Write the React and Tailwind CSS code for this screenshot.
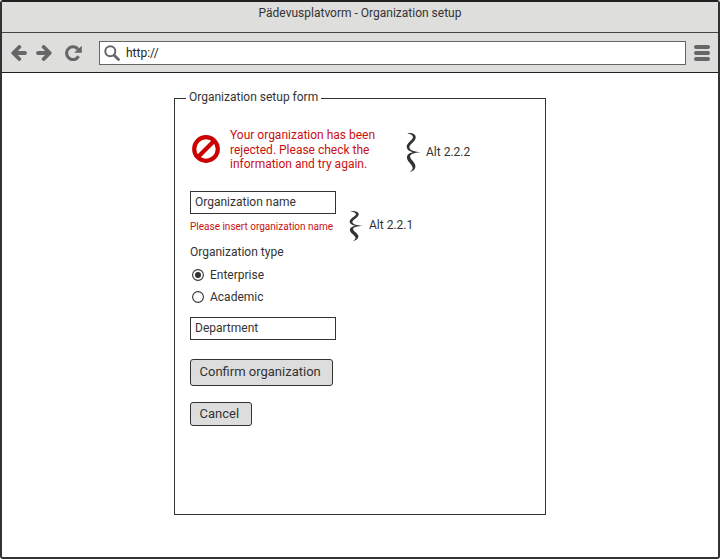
function Brace({ className }) {
  return (
    <svg className={className} viewBox="0 0 15 39" preserveAspectRatio="none" fill="#333">
      <path d="M1.3 .3 C5.5 -.4 9.8 1 9.7 4.4 C9.5 8.3 3.9 10.8 3.4 13.9 C3.1 16.4 6.6 18.6 14.7 19.3 C7.5 20 4 21.2 4.1 23.8 C4.3 26.8 9.5 29.4 9.4 33.2 C9.3 36.4 7 38.5 3.6 38.9 C6.2 37.6 7.1 36 6.3 33.8 C5.2 30.8 1 28.3 .9 24.6 C.8 21.8 3 20.1 6.8 19.3 C3.2 18.4 .7 16.7 .7 13.6 C.8 9.8 5.6 7.8 6.8 4.9 C7.5 2.6 5.2 1.1 1.3 .3 Z" />
    </svg>
  );
}

function Arrow({ className }) {
  return (
    <svg className={className} viewBox="0 0 16 16" fill="none" stroke="#666" strokeWidth="3.8" strokeLinecap="round">
      <path d="M8.3 2 L2.3 8 L8.3 14" strokeLinejoin="round" />
      <path d="M3 8 H14" />
    </svg>
  );
}

function Radio({ label, checked }) {
  return (
    <label className="flex h-[22px] items-center pl-[2px]">
      <svg className="h-3 w-3" viewBox="0 0 12 12">
        <circle cx="6" cy="6" r="5.4" fill="#fff" stroke="#333" strokeWidth="1.1" />
        {checked && <circle cx="6" cy="6" r="3" fill="#333" />}
      </svg>
      <span className="ml-[6px]">{label}</span>
    </label>
  );
}

export default function App() {
  return (
    <div className="flex h-[559px] w-[720px] flex-col overflow-hidden rounded-[3px] border-2 border-[#333] border-t-[#231f20] bg-white font-[Roboto,sans-serif] text-[12px] leading-[14px] whitespace-nowrap text-[#333]">
      <header className="h-[31px] border-b border-[#444] bg-[#dededd] pt-[4px] text-center">
        Pädevusplatvorm - Organization setup
      </header>
      <div className="flex h-[40px] items-center border-b border-[#231f20] bg-[#dededd] pl-[9px]">
        <Arrow className="h-4 w-4" />
        <Arrow className="ml-[9px] h-4 w-4 rotate-180" />
        <svg className="ml-[13px] h-4 w-[17px]" viewBox="0 0 17 16">
          <path d="M13 4.2 A6.4 6.4 0 1 0 13.6 11.2" fill="none" stroke="#666" strokeWidth="3.1" />
          <path d="M16.8 .8 V7.8 H9.2 L11.8 5.2 L14.4 3 Z" fill="#666" />
        </svg>
        <div className="ml-[17px] flex h-6 w-[587px] items-center border border-[#666] bg-white pl-[4px]">
          <svg className="h-4 w-4" viewBox="0 0 16 16" fill="none" stroke="#666">
            <circle cx="6.3" cy="6.2" r="5" strokeWidth="2" />
            <path d="M10.2 10.2 L14.5 14.5" strokeWidth="2.8" strokeLinecap="round" />
          </svg>
          <span className="ml-[6px] text-[#222]">http://</span>
        </div>
        <div className="ml-[8px] flex flex-col gap-[2px]">
          <span className="h-1 w-4 rounded-[2px] bg-[#666]" />
          <span className="h-1 w-4 rounded-[2px] bg-[#666]" />
          <span className="h-1 w-4 rounded-[2px] bg-[#666]" />
        </div>
      </div>
      <main className="pt-[18px] pl-[172px]">
        <fieldset className="h-[424px] w-[372px] border border-[#333] pl-[15px]">
          <legend className="-ml-[4px] px-[3px]"><span className="relative -top-px">Organization setup form</span></legend>
          <div className="mt-[22px] flex h-[46px] items-start">
            <svg className="mt-[8px] ml-[2px] h-7 w-7" viewBox="0 0 28 28" fill="none" stroke="#c00" strokeWidth="4.2">
              <circle cx="14" cy="14" r="11.8" />
              <path d="M21.5 6.5 L6.5 21.5" />
            </svg>
            <p className="mt-[1px] ml-[10px] w-[176px] leading-[14.5px] text-[#c91010]">
              Your organization has been
              <br />
              rejected. Please check the
              <br />
              information and try again.
            </p>
            <Brace className="mt-[6px] h-[39px] w-[15px]" />
            <span className="mt-[18px] ml-[5px]">Alt 2.2.2</span>
          </div>
          <div className="mt-[18px] flex h-[52px]">
            <div className="w-[159px]">
              <div className="flex h-[23px] w-[146px] items-center border border-[#333] pb-[1px] pl-[4px]">Organization name</div>
              <p className="mt-[6px] text-[10px] text-[#c91010]">Please insert organization name</p>
            </div>
            <Brace className="mt-[20px] h-[30px] w-[15px]" />
            <span className="mt-[27px] ml-[5px]">Alt 2.2.1</span>
          </div>
          <p className="mt-[2px]">Organization type</p>
          <div className="mt-[5px]">
            <Radio label="Enterprise" checked />
            <Radio label="Academic" />
          </div>
          <div className="mt-[9px] flex h-[23px] w-[146px] items-center border border-[#333] pb-[1px] pl-[4px]">Department</div>
          <button className="mt-[19px] flex h-[27px] w-[143px] items-center rounded-[3px] border border-[#333] bg-[#ddd] pb-[2px] pl-[8.5px] text-[13px]">
            Confirm organization
          </button>
          <button className="mt-[16px] flex h-[24px] w-[62px] items-center rounded-[3px] border border-[#333] bg-[#ddd] pb-[1px] pl-[8.5px] text-[13px]">
            Cancel
          </button>
        </fieldset>
      </main>
    </div>
  );
}
